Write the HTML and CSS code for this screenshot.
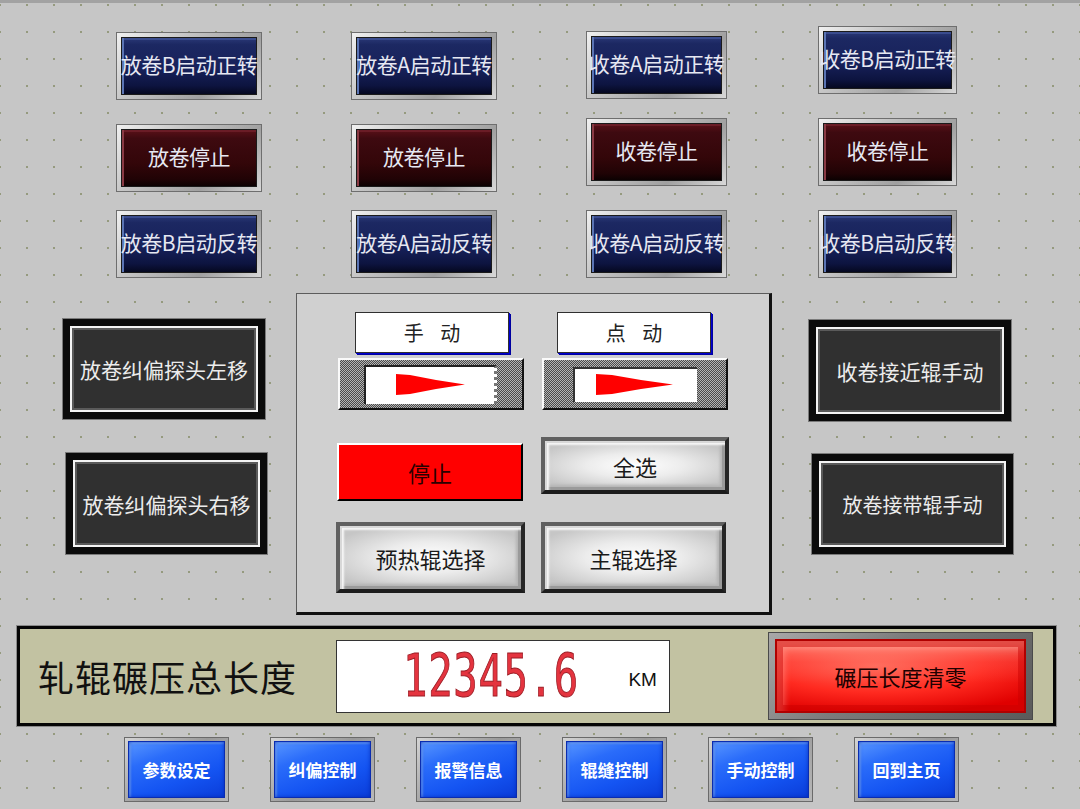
FILE: index.html
```html
<!DOCTYPE html>
<html lang="zh-CN">
<head>
<meta charset="utf-8">
<title>HMI</title>
<link rel="stylesheet" href="styles.css">
</head>
<body>
<div class="screen">
  <div class="top">
    <div class="col c1">
      <div class="hbtn"><div class="face navy">放卷B启动正转</div></div>
      <div class="hbtn g24"><div class="face maroon">放卷停止</div></div>
      <div class="hbtn g18"><div class="face navy">放卷B启动反转</div></div>
    </div>
    <div class="col c2">
      <div class="hbtn"><div class="face navy">放卷A启动正转</div></div>
      <div class="hbtn g24"><div class="face maroon">放卷停止</div></div>
      <div class="hbtn g18"><div class="face navy">放卷A启动反转</div></div>
    </div>
    <div class="col c3">
      <div class="hbtn"><div class="face navy">收卷A启动正转</div></div>
      <div class="hbtn g19"><div class="face maroon">收卷停止</div></div>
      <div class="hbtn g24"><div class="face navy">收卷A启动反转</div></div>
    </div>
    <div class="col c4">
      <div class="hbtn"><div class="face navy">收卷B启动正转</div></div>
      <div class="hbtn g24"><div class="face maroon">收卷停止</div></div>
      <div class="hbtn g24"><div class="face navy">收卷B启动反转</div></div>
    </div>
  </div>

  <div class="mid">
    <div class="side left">
      <div class="sbtn s1"><span>放卷纠偏探头左移</span></div>
      <div class="sbtn s2"><span>放卷纠偏探头右移</span></div>
    </div>

    <div class="panel">
      <div class="pcol">
        <div class="mode">手 动</div>
        <div class="toggle">
          <div class="tinner t-left">
            <svg class="arrow" width="70" height="22" viewBox="0 0 70 22"><path d="M0 0 L14 1 L40 6 L69 10.5 L40 15 L14 20 L0 21 Z" fill="#ff0000"/></svg>
          </div>
        </div>
        <div class="stop">停止</div>
        <div class="gbtn pre">预热辊选择</div>
      </div>
      <div class="pcol">
        <div class="mode m2">点 动</div>
        <div class="toggle">
          <div class="tinner t-right">
            <svg class="arrow" width="78" height="22" viewBox="0 0 78 22"><path d="M0 0 L16 1 L45 6 L77 10.5 L45 15 L16 20 L0 21 Z" fill="#ff0000"/></svg>
          </div>
        </div>
        <div class="gbtn all">全选</div>
        <div class="gbtn main">主辊选择</div>
      </div>
    </div>

    <div class="side right">
      <div class="sbtn s3"><span>收卷接近辊手动</span></div>
      <div class="sbtn s4"><span>放卷接带辊手动</span></div>
    </div>
  </div>

  <div class="bar">
    <div class="bar-label">轧辊碾压总长度</div>
    <div class="display">
      <span class="digits">12345.6</span>
      <span class="unit">KM</span>
    </div>
    <div class="clear"><div class="clear-face">碾压长度清零</div></div>
  </div>

  <nav class="nav">
    <div class="nbtn"><span>参数设定</span></div>
    <div class="nbtn"><span>纠偏控制</span></div>
    <div class="nbtn"><span>报警信息</span></div>
    <div class="nbtn"><span>辊缝控制</span></div>
    <div class="nbtn"><span>手动控制</span></div>
    <div class="nbtn"><span>回到主页</span></div>
  </nav>
</div>
</body>
</html>
```

FILE: styles.css
```css
html, body {
  margin: 0;
  padding: 0;
  background: #c6c6c6;
}

.screen {
  width: 1080px;
  height: 809px;
  box-sizing: border-box;
  border-top: 3px solid #a2a2a2;
  background-color: #c6c6c6;
  background-image: radial-gradient(circle at 1px 1px, #959a7e 0.9px, transparent 1.3px);
  background-size: 27px 27px;
  background-position: 26px 28px;
  overflow: hidden;
  font-family: "Noto Sans CJK SC", "Noto Sans", sans-serif;
  display: flex;
  flex-direction: column;
}

/* ---------- top button grid ---------- */
.top {
  display: grid;
  grid-template-columns: 146px 146px 141px 141px;
  column-gap: 89px;
  padding-left: 116px;
  margin-top: 23px;
  align-items: end;
}

.col {
  display: flex;
  flex-direction: column;
}

.c4 { margin-left: 2px; }

.g18 { margin-top: 18px; }
.g19 { margin-top: 19px; }
.g24 { margin-top: 24px; }

.hbtn {
  height: 68px;
  box-sizing: border-box;
  padding: 4px;
  border: 1px solid #6e6e6e;
  background: linear-gradient(135deg, #f0f0f0 0%, #c4c4c4 35%, #a0a0a0 70%, #d8d8d8 100%);
}

.face {
  height: 100%;
  display: flex;
  align-items: center;
  justify-content: center;
  padding-bottom: 4px;
  color: #e6e8f2;
  font-size: 21px;
  letter-spacing: -0.5px;
  white-space: nowrap;
  overflow: visible;
  border: 1px solid #1a1a1a;
  box-sizing: border-box;
}

.navy {
  background: linear-gradient(180deg, #2a3876 0%, #1c2862 12%, #17215a 55%, #0d1440 85%, #050820 100%);
  box-shadow: inset 3px 0 0 -1px #5a74b4, inset 0 2px 0 #3a4c8e;
}

.maroon {
  background: linear-gradient(180deg, #5a1018 0%, #3e0a10 15%, #330609 60%, #200305 88%, #0c0102 100%);
  box-shadow: inset 3px 0 0 -1px #8a3a44, inset 0 2px 0 #6a1c26;
}

/* ---------- middle area ---------- */
.mid {
  display: flex;
  align-items: flex-start;
  margin-top: 15px;
}

.side {
  width: 204px;
  display: flex;
  flex-direction: column;
}

.side.left { margin-left: 63px; }
.side.right { margin-left: 37px; }

.sbtn {
  width: 202px;
  height: 100px;
  box-sizing: border-box;
  border: 7px solid #0b0b0b;
  outline: 1px solid #7a7a7a;
  background: #303030;
  box-shadow: inset 0 0 0 2px #f4f4f4, inset 0 0 0 4px #5a5a5a;
  display: flex;
  align-items: center;
  justify-content: center;
  color: #ececec;
  font-size: 21px;
  white-space: nowrap;
}

.s1 { margin-top: 26px; }
.s2 { margin-top: 34px; margin-left: 3px; width: 201px; height: 101px; }
.s3 { margin-top: 27px; height: 101px; }
.s4 { margin-top: 33px; margin-left: 3px; width: 201px; font-size: 20px; }

.panel {
  margin-left: 29px;
  width: 476px;
  height: 322px;
  box-sizing: border-box;
  border-top: 1px solid #5c5c5c;
  border-left: 1px solid #5c5c5c;
  border-right: 3px solid #111;
  border-bottom: 3px solid #111;
  background: #d0d0d0;
  display: grid;
  grid-template-columns: 187px 187px;
  column-gap: 17px;
  padding-left: 40px;
}

.pcol {
  display: flex;
  flex-direction: column;
}

.mode {
  margin-top: 18px;
  margin-left: 18px;
  width: 154px;
  height: 41px;
  box-sizing: border-box;
  background: #fff;
  border: 1px solid #303030;
  box-shadow: 1px 1px 0 #0000d0, 2px 2px 0 #0000a0;
  display: flex;
  align-items: center;
  justify-content: center;
  font-size: 20px;
  color: #222;
  letter-spacing: 6px;
  padding-left: 6px;
}

.mode.m2 { margin-left: 16px; }

.toggle {
  margin-top: 5px;
  margin-left: 1px;
  width: 186px;
  height: 52px;
  box-sizing: border-box;
  border-top: 2px solid #fafafa;
  border-left: 2px solid #fafafa;
  border-right: 2px solid #111;
  border-bottom: 2px solid #111;
  background-color: #888;
  background-image: repeating-conic-gradient(#4a4a4a 0 25%, #b4b4b4 0 50%);
  background-size: 2px 2px;
  display: flex;
  align-items: center;
}

.tinner {
  background: #fff;
  box-sizing: border-box;
  display: flex;
  align-items: center;
}

.t-left {
  margin-left: 24px;
  width: 133px;
  height: 39px;
  border-top: 2px solid #222;
  border-left: 2px solid #222;
  border-right: 3px dotted #777;
  padding-left: 30px;
}

.t-right {
  margin-left: 29px;
  width: 124px;
  height: 35px;
  border-top: 2px solid #333;
  border-left: 2px solid #333;
  padding-left: 21px;
}

.arrow { display: block; }

.stop {
  margin-top: 33px;
  width: 186px;
  height: 58px;
  box-sizing: border-box;
  background: #ff0000;
  border-top: 2px solid #fff;
  border-left: 2px solid #fff;
  border-right: 2px solid #000;
  border-bottom: 2px solid #000;
  display: flex;
  align-items: center;
  justify-content: center;
  font-size: 22px;
  color: #2a0000;
}

.gbtn {
  box-sizing: border-box;
  border: 4px solid;
  border-color: #606060 #262626 #1c1c1c #606060;
  background: radial-gradient(ellipse 60% 55% at 50% 50%, #ffffff 0%, #ececec 45%, #c6c6c6 100%);
  box-shadow: inset 2px 2px 0 #d8d8d8, inset 4px 4px 2px #f6f6f6, inset -3px -3px 0 #9a9a9a, inset -5px -5px 3px #b4b4b4;
  display: flex;
  align-items: center;
  justify-content: center;
  font-size: 22px;
  color: #1a1a1a;
}

.pre { margin-top: 21px; margin-left: -1px; width: 189px; height: 71px; }
.all { margin-top: 27px; width: 188px; height: 57px; }
.main { margin-top: 28px; width: 185px; height: 71px; }

/* ---------- length bar ---------- */
.bar {
  margin-top: 11px;
  margin-left: 17px;
  width: 1039px;
  height: 100px;
  box-sizing: border-box;
  border: 3px solid #050505;
  outline: 1px solid #8a8a8a;
  background: #c2c2a2;
  display: flex;
  align-items: center;
}

.bar-label {
  width: 316px;
  box-sizing: border-box;
  padding-left: 18px;
  font-size: 36px;
  color: #111;
  white-space: nowrap;
  letter-spacing: 1px;
}

.display {
  width: 334px;
  height: 73px;
  box-sizing: border-box;
  background: #fff;
  border: 1px solid #333;
  display: flex;
  align-items: center;
}

.digits {
  display: inline-block;
  margin-left: 66px;
  font-family: "DejaVu Sans Mono", monospace;
  font-size: 58px;
  line-height: 1;
  color: #e4343f;
  -webkit-text-stroke: 1px #9a1c24;
  transform: scaleX(0.7);
  transform-origin: left center;
  letter-spacing: 1px;
}

.unit {
  margin-left: -26px;
  margin-top: 8px;
  font-family: "Liberation Sans", sans-serif;
  font-size: 19px;
  color: #111;
}

.clear {
  margin-left: 98px;
  width: 265px;
  height: 88px;
  box-sizing: border-box;
  padding: 6px;
  background: linear-gradient(135deg, #a8a8a8 0%, #7c7c7c 40%, #5a5a5a 100%);
  border: 1px solid #4a4a4a;
}

.clear-face {
  height: 100%;
  box-sizing: border-box;
  border: 2px solid #b00000;
  background:
    linear-gradient(180deg, rgba(255,190,170,0.55) 0%, rgba(255,120,110,0.25) 30%, rgba(255,0,0,0) 60%),
    radial-gradient(ellipse 80% 70% at 40% 35%, #ff6a5a 0%, #ff2a20 55%, #e00000 100%);
  box-shadow: inset 0 0 0 6px rgba(200,0,0,0.45), inset 8px 8px 6px rgba(255,200,190,0.35);
  display: flex;
  align-items: center;
  justify-content: center;
  font-size: 22px;
  color: #200000;
}

/* ---------- nav ---------- */
.nav {
  display: flex;
  gap: 41px;
  padding-left: 124px;
  margin-top: 11px;
}

.nbtn {
  width: 105px;
  height: 65px;
  box-sizing: border-box;
  padding: 3px;
  border: 1px solid #6a6a6a;
  background: linear-gradient(135deg, #d4d4d4 0%, #9a9a9a 50%, #b8b8b8 100%);
}

.nbtn span {
  height: 100%;
  box-sizing: border-box;
  display: flex;
  align-items: center;
  justify-content: center;
  background: linear-gradient(160deg, #5a98ff 0%, #2a6cfa 30%, #1454f2 65%, #0a3cd8 100%);
  box-shadow: inset 0 0 0 1px #0a2cb0, inset 0 0 5px #0026b0, inset 3px 3px 2px rgba(140,190,255,0.6);
  color: #fff;
  font-size: 17px;
  font-weight: bold;
  white-space: nowrap;
}
```
